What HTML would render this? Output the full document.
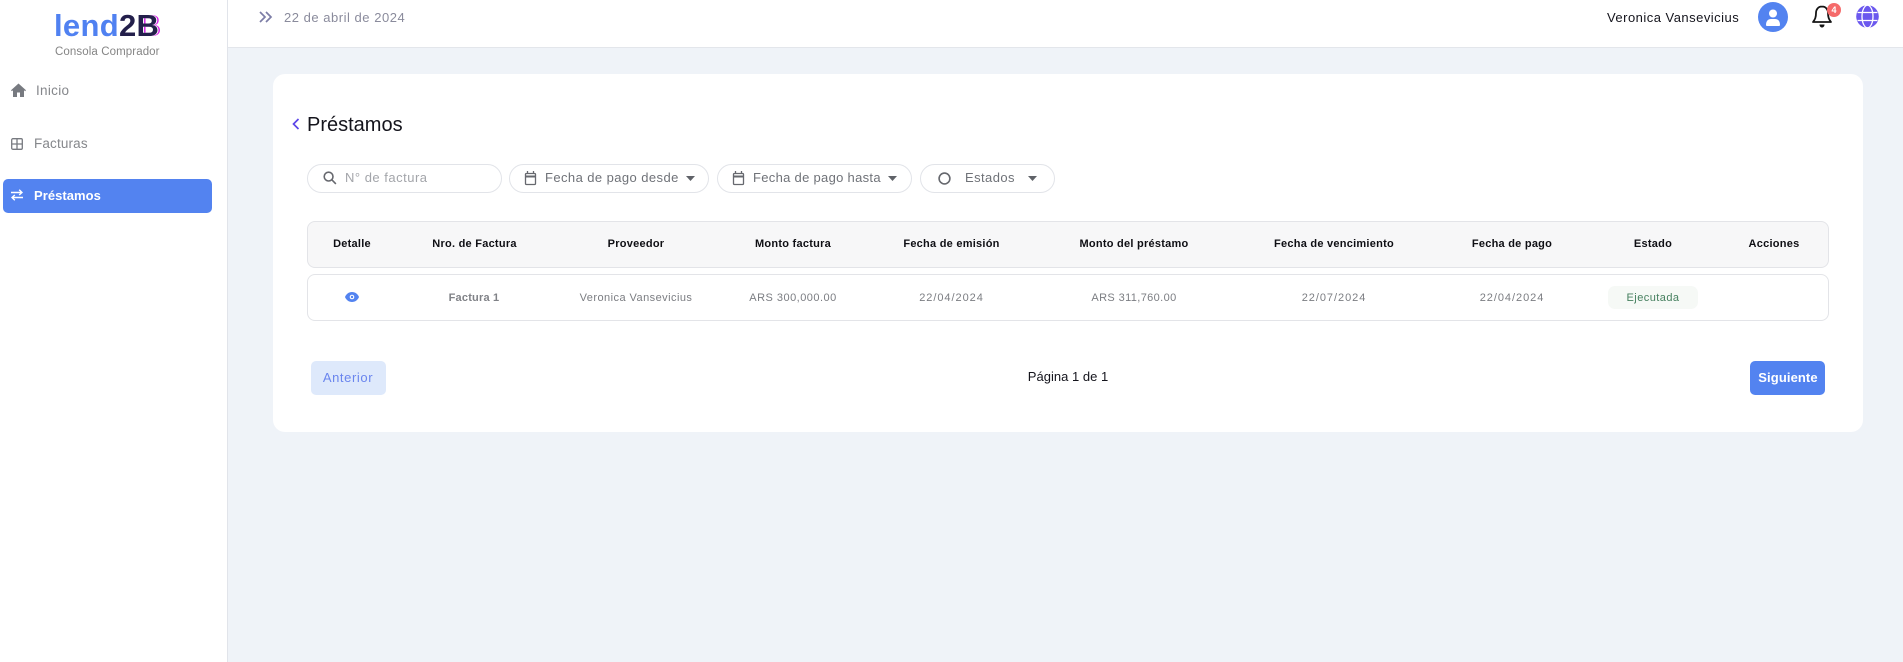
<!DOCTYPE html>
<html lang="es"><head><meta charset="utf-8"><title>Préstamos</title>
<style>
*{box-sizing:border-box}
html,body{margin:0;padding:0;width:1903px;height:662px;overflow:hidden;background:#eff3f8;font-family:"Liberation Sans",sans-serif}
.a{position:absolute}
.t{position:absolute;white-space:nowrap;line-height:20px;height:20px}
.c{transform:translateX(-50%)}
.pill{position:absolute;top:164px;height:29px;background:#fff;border:1px solid #e2e4e9;border-radius:15px}
.f{top:168px;font-size:13px;letter-spacing:.42px;color:#6f7278}
.h{top:234px;font-size:11px;font-weight:bold;color:#0f0f14;letter-spacing:.25px}
.d{top:288px;font-size:11px;color:#7b7d82;letter-spacing:.45px}
svg{position:absolute;display:block}
</style></head><body>
<div class="a" style="left:0;top:0;width:228px;height:662px;background:#fff;border-right:1px solid #e1e4ea"></div>
<div class="a" style="left:228px;top:0;width:1675px;height:48px;background:#fff;border-bottom:1px solid #e3e6eb"></div>

<div class="t" style="left:54px;top:9px;height:34px;line-height:34px;font-size:31px;font-weight:bold;color:#5081f1;letter-spacing:.3px">lend<span style="color:#231f4b">2<span style="text-shadow:1px 0 0 #fff,2.500px 0 0 #d81fe8">B</span></span></div>
<div class="t" style="left:55px;top:42px;font-size:11.5px;color:#858585;letter-spacing:.1px">Consola Comprador</div>

<svg style="left:11px;top:83px" width="15" height="14" viewBox="0 0 15 14"><path d="M7.500.5 0 7.200l.9 1L2 7.300V14h4V9.500h3V14h4V7.300l1.100.9.900-1z" fill="#777a80"/></svg>
<div class="t" style="left:36px;top:81px;font-size:13.500px;color:#85878b;letter-spacing:.3px">Inicio</div>

<svg style="left:11px;top:138px" width="12" height="12" viewBox="0 0 12 12" fill="none" stroke="#777a80" stroke-width="1.300"><rect x=".7" y=".7" width="10.600" height="10.600" rx="1.200"/><path d="M6 .7v10.600M.7 6h10.600"/></svg>
<div class="t" style="left:34px;top:134px;font-size:13.500px;color:#85878b;letter-spacing:.15px">Facturas</div>

<div class="a" style="left:3px;top:179px;width:209px;height:34px;border-radius:5px;background:#5383f0"></div>
<svg style="left:11px;top:189px" width="12" height="12" viewBox="0 0 12 12" fill="none" stroke="#fff" stroke-width="1.400"><path d="M0 3.500h11M8.200.8 11 3.500 8.200 6M12 8.500H1M3.800 6 1 8.500l2.800 2.700"/></svg>
<div class="t" style="left:34px;top:186px;font-size:13px;font-weight:bold;color:#fff;letter-spacing:.05px">Préstamos</div>

<svg style="left:259px;top:11px" width="14" height="12" viewBox="0 0 14 12" fill="none" stroke="#7c7da6" stroke-width="1.700"><path d="M1 1l5 5-5 5M7 1l5 5-5 5"/></svg>
<div class="t" style="left:284px;top:8px;font-size:13px;color:#8a8b9c;letter-spacing:.52px">22 de abril de 2024</div>

<div class="t" style="left:1607px;top:8px;font-size:13px;color:#14141c;letter-spacing:.48px">Veronica Vansevicius</div>
<svg style="left:1758px;top:2px" width="30" height="30" viewBox="0 0 30 30"><circle cx="15" cy="15" r="15" fill="#5383f0"/><circle cx="15" cy="11.500" r="4" fill="#fff"/><path d="M8 23c0-4 2-6 5-6h4c3 0 5 2 5 6 0 .6-.4 1-1 1H9c-.6 0-1-.4-1-1z" fill="#fff"/></svg>
<svg style="left:1811px;top:4px" width="22" height="24" viewBox="0 0 22 24" fill="none"><path d="M11 2.500c-3.800 0-6 3-6 6.500 0 4.500-1 6.500-3 9h18c-2-2.500-3-4.500-3-9 0-3.500-2.200-6.500-6-6.500z" stroke="#151515" stroke-width="1.800" stroke-linejoin="round"/><path d="M8.500 20.500h5c0 1.800-1 3-2.500 3s-2.500-1.200-2.500-3z" fill="#151515"/></svg>
<div class="a" style="left:1827px;top:3px;width:14px;height:14px;border-radius:50%;background:#f56a6a;color:#fff;font-size:9px;font-weight:bold;line-height:14px;text-align:center">4</div>
<svg style="left:1856px;top:5px" width="23" height="23" viewBox="0 0 23 23"><circle cx="11.500" cy="11.500" r="11.300" fill="#6b58ee"/><g fill="none" stroke="#fff" stroke-width="1.300"><ellipse cx="11.500" cy="11.500" rx="5.500" ry="11.300"/><path d="M1.500 7.500h20M1.500 15.500h20"/></g></svg>

<div class="a" style="left:273px;top:74px;width:1590px;height:358px;background:#fff;border-radius:12px"></div>
<svg style="left:292px;top:118px" width="8" height="12" viewBox="0 0 8 12" fill="none" stroke="#5b45e8" stroke-width="1.700"><path d="M6.500 1 1.500 6l5 5"/></svg>
<div class="t" style="left:307px;top:115px;font-size:20px;color:#14141c;letter-spacing:0">Préstamos</div>

<div class="pill" style="left:307px;width:195px"></div>
<svg style="left:323px;top:171px" width="14" height="14" viewBox="0 0 15 15" fill="none" stroke="#66686e" stroke-width="1.700"><circle cx="6" cy="6" r="4.700"/><path d="m9.500 9.500 4.300 4.300"/></svg>
<div class="t f" style="left:345px;color:#a3a5aa;letter-spacing:.5px">N° de factura</div>

<div class="pill" style="left:509px;width:200px"></div>
<svg style="left:524px;top:171px" width="13" height="15" viewBox="0 0 13 15" fill="none" stroke="#66686e" stroke-width="1.300"><rect x="1.500" y="2.500" width="10" height="11" rx="1"/><path d="M1.500 5.500h10" stroke-width="2"/><path d="M3.500 0v3M9.500 0v3"/></svg>
<div class="t f" style="left:545px">Fecha de pago desde</div>
<svg style="left:686px;top:176px" width="9" height="5" viewBox="0 0 9 5"><path d="M0 0h9L4.500 5z" fill="#5f6268"/></svg>

<div class="pill" style="left:717px;width:195px"></div>
<svg style="left:732px;top:171px" width="13" height="15" viewBox="0 0 13 15" fill="none" stroke="#66686e" stroke-width="1.300"><rect x="1.500" y="2.500" width="10" height="11" rx="1"/><path d="M1.500 5.500h10" stroke-width="2"/><path d="M3.500 0v3M9.500 0v3"/></svg>
<div class="t f" style="left:753px;letter-spacing:.3px">Fecha de pago hasta</div>
<svg style="left:888px;top:176px" width="9" height="5" viewBox="0 0 9 5"><path d="M0 0h9L4.500 5z" fill="#5f6268"/></svg>

<div class="pill" style="left:920px;width:135px"></div>
<svg style="left:938px;top:172px" width="13" height="13" viewBox="0 0 13 13" fill="none" stroke="#66686e" stroke-width="1.600"><circle cx="6.500" cy="6.500" r="5.400"/></svg>
<div class="t f" style="left:965px">Estados</div>
<svg style="left:1028px;top:176px" width="9" height="5" viewBox="0 0 9 5"><path d="M0 0h9L4.500 5z" fill="#5f6268"/></svg>

<div class="a" style="left:307px;top:221px;width:1522px;height:47px;background:#f7f7f8;border:1px solid #e3e4e8;border-radius:8px"></div>
<div class="t h c" style="left:352px">Detalle</div>
<div class="t h c" style="left:474.500px">Nro. de Factura</div>
<div class="t h c" style="left:636px">Proveedor</div>
<div class="t h c" style="left:793px">Monto factura</div>
<div class="t h c" style="left:951.500px">Fecha de emisión</div>
<div class="t h c" style="left:1134px">Monto del préstamo</div>
<div class="t h c" style="left:1334px">Fecha de vencimiento</div>
<div class="t h c" style="left:1512px">Fecha de pago</div>
<div class="t h c" style="left:1653px">Estado</div>
<div class="t h c" style="left:1774px">Acciones</div>

<div class="a" style="left:307px;top:274px;width:1522px;height:47px;background:#fff;border:1px solid #e3e4e8;border-radius:8px"></div>
<svg style="left:345px;top:292px" width="14" height="10" viewBox="0 0 14 10"><path d="M7 0C3.800 0 1.200 2 0 5c1.200 3 3.800 5 7 5s5.800-2 7-5c-1.200-3-3.800-5-7-5z" fill="#5383f0"/><circle cx="7" cy="5" r="2.300" fill="#fff"/><circle cx="7" cy="5" r="1.200" fill="#5383f0"/></svg>
<div class="t d c" style="left:474px;font-weight:bold;color:#808287;letter-spacing:.2px">Factura 1</div>
<div class="t d c" style="left:636px">Veronica Vansevicius</div>
<div class="t d c" style="left:793px;letter-spacing:.48px">ARS 300,000.00</div>
<div class="t d c" style="left:951.500px;letter-spacing:.95px">22/04/2024</div>
<div class="t d c" style="left:1134px;letter-spacing:.38px">ARS 311,760.00</div>
<div class="t d c" style="left:1334px;letter-spacing:.95px">22/07/2024</div>
<div class="t d c" style="left:1512px;letter-spacing:.95px">22/04/2024</div>
<div class="a" style="left:1608px;top:286px;width:90px;height:23px;background:#f6f9f6;border-radius:7px"></div>
<div class="t d c" style="left:1653px;color:#46805f">Ejecutada</div>

<div class="a" style="left:311px;top:361px;width:75px;height:34px;background:#dee9fb;border-radius:5px"></div>
<div class="t c" style="left:348px;top:368px;font-size:13px;color:#6a85ee;letter-spacing:.6px">Anterior</div>
<div class="t c" style="left:1068px;top:367px;font-size:13px;color:#14141c;letter-spacing:.02px">Página 1 de 1</div>
<div class="a" style="left:1750px;top:361px;width:75px;height:34px;background:#5383f0;border-radius:5px"></div>
<div class="t c" style="left:1788px;top:368px;font-size:13px;font-weight:bold;color:#fff;letter-spacing:.1px">Siguiente</div>
</body></html>
